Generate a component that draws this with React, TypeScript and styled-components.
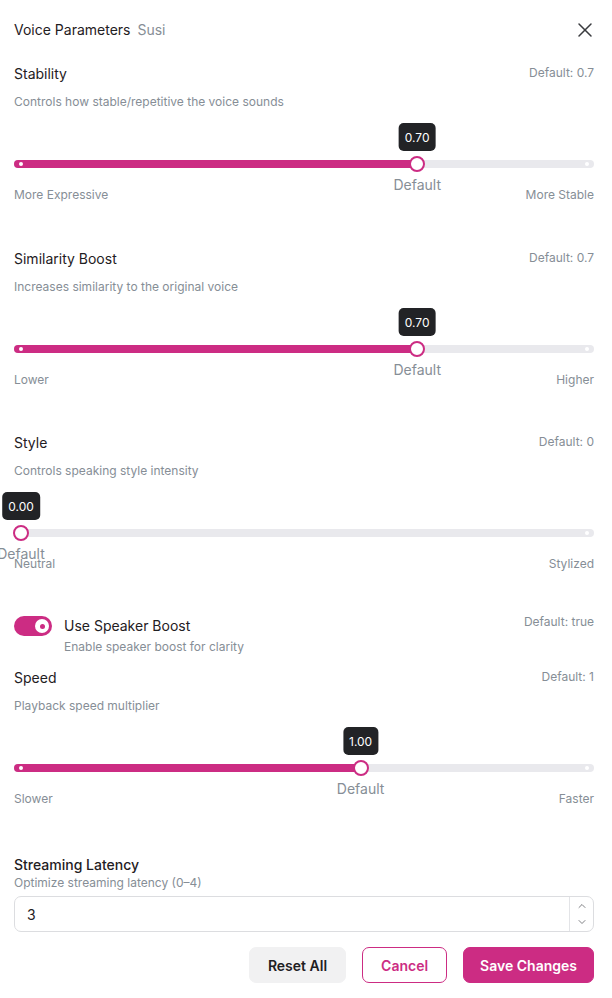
import React from 'react'
import styled, { createGlobalStyle } from 'styled-components'
import { X, ChevronUp, ChevronDown } from 'lucide-react'

const PINK = '#cc2c83'
const GRAY = '#868e96'
const INK = '#1f2023'

const GlobalStyle = createGlobalStyle`
   * { box-sizing: border-box; }
   body {
      margin: 0;
      background: #fff;
      font-family: Inter, 'Noto Sans', 'Liberation Sans', sans-serif;
      color: ${INK};
   }
`

const Styles = {
   Panel: styled.div`
      width: 612px;
      padding: 0 18px 0 14px;
      display: flex;
      flex-direction: column;
   `,
   Header: styled.header`
      height: 60px;
      display: flex;
      align-items: center;
      gap: 7px;
   `,
   HeaderTitle: styled.h2`
      margin: 0;
      font-size: 14px;
      line-height: 20px;
      font-weight: 400;
      color: ${INK};
   `,
   HeaderSub: styled.span`
      font-size: 14px;
      line-height: 20px;
      color: ${GRAY};
      flex: 1;
   `,
   Close: styled.button`
      border: 0;
      background: none;
      padding: 0;
      margin-right: -3px;
      display: flex;
      color: #3a3b3f;
      cursor: pointer;
   `,
   Section: styled.section<{ $gap: number }>`
      margin-top: ${(p) => p.$gap}px;
      display: flex;
      flex-direction: column;
   `,
   TitleRow: styled.div`
      display: flex;
      justify-content: space-between;
      align-items: center;
   `,
   Title: styled.div<{ $strong?: boolean }>`
      font-size: 14px;
      line-height: 20px;
      font-weight: ${(p) => (p.$strong ? 500 : 400)};
      color: ${INK};
   `,
   DefaultNote: styled.span`
      font-size: 12px;
      line-height: 16px;
      color: ${GRAY};
      margin-top: -2px;
   `,
   Desc: styled.div<{ $gap: number }>`
      margin-top: ${(p) => p.$gap}px;
      font-size: 12px;
      line-height: 16px;
      color: ${GRAY};
   `,
   SliderRoot: styled.div`
      position: relative;
      margin-top: 50px;
      height: 8px;
   `,
   Track: styled.div`
      height: 8px;
      border-radius: 4px;
      background: #e9e9ed;
      position: relative;
   `,
   Fill: styled.div`
      position: absolute;
      left: 0;
      top: 0;
      bottom: 0;
      border-radius: 4px;
      background: ${PINK};
   `,
   MarkDot: styled.span`
      position: absolute;
      top: 2px;
      width: 4px;
      height: 4px;
      margin-left: -2px;
      border-radius: 50%;
      background: #fff;
   `,
   Thumb: styled.span`
      position: absolute;
      top: -4px;
      width: 16px;
      height: 16px;
      margin-left: -8px;
      border-radius: 50%;
      background: #fff;
      border: 2px solid ${PINK};
   `,
   Tip: styled.span`
      position: absolute;
      bottom: calc(100% + 9px);
      transform: translateX(-50%);
      height: 28px;
      padding: 0 6px;
      display: flex;
      align-items: center;
      border-radius: 5px;
      background: #222326;
      color: #fff;
      font-size: 12px;
      white-space: nowrap;
   `,
   MarkLabel: styled.span`
      position: absolute;
      top: 15px;
      transform: translateX(-50%);
      font-size: 14px;
      line-height: 20px;
      color: ${GRAY};
      white-space: nowrap;
   `,
   RangeLabels: styled.div`
      margin-top: 19px;
      display: flex;
      justify-content: space-between;
      font-size: 12px;
      line-height: 16px;
      color: ${GRAY};
   `,
   ToggleRow: styled.div`
      display: flex;
      align-items: flex-start;
      gap: 12px;
   `,
   Switch: styled.span<{ $on: boolean }>`
      flex: none;
      width: 38px;
      height: 20px;
      border-radius: 10px;
      background: ${(p) => (p.$on ? PINK : '#dee2e6')};
      display: flex;
      align-items: center;
      justify-content: ${(p) => (p.$on ? 'flex-end' : 'flex-start')};
      padding: 0 3px;
   `,
   SwitchKnob: styled.span`
      width: 14px;
      height: 14px;
      border-radius: 50%;
      background: #fff;
      display: flex;
      align-items: center;
      justify-content: center;
      &::after {
         content: '';
         width: 5px;
         height: 5px;
         border-radius: 50%;
         background: ${PINK};
      }
   `,
   ToggleText: styled.div`
      flex: 1;
      display: flex;
      flex-direction: column;
   `,
   InputBox: styled.div`
      margin-top: 5px;
      height: 36px;
      border: 1px solid #dcdde0;
      border-radius: 7px;
      display: flex;
      overflow: hidden;
   `,
   Input: styled.input`
      flex: 1;
      border: 0;
      outline: none;
      padding: 0 12px;
      font-family: inherit;
      font-size: 14px;
      color: ${INK};
      background: transparent;
   `,
   Spinner: styled.div`
      width: 24px;
      border-left: 1px solid #e3e4e7;
      display: flex;
      flex-direction: column;
      align-items: center;
      justify-content: center;
      gap: 4px;
      color: #55575c;
   `,
   Actions: styled.div`
      margin-top: 15px;
      display: flex;
      justify-content: flex-end;
      gap: 16px;
   `,
   Button: styled.button<{ $kind: 'soft' | 'outline' | 'filled' }>`
      height: 36px;
      padding: 0 ${(p) => (p.$kind === 'filled' ? 16 : 18)}px;
      border-radius: 7px;
      font-family: inherit;
      font-size: 14px;
      font-weight: 600;
      cursor: pointer;
      border: 1px solid
         ${(p) => (p.$kind === 'soft' ? '#f1f1f2' : PINK)};
      background: ${(p) =>
         p.$kind === 'soft' ? '#f1f1f2' : p.$kind === 'filled' ? PINK : '#fff'};
      color: ${(p) =>
         p.$kind === 'soft' ? INK : p.$kind === 'filled' ? '#fff' : PINK};
   `,
}

interface SliderProps {
   value: number
   min: number
   max: number
   mark: number
   left: string
   right: string
}

// inner range is inset by half the thumb so both ends sit inside the bar
const pos = (v: number, min: number, max: number) =>
   `calc(7px + (100% - 14px) * ${(v - min) / (max - min)})`

const Slider = ({ value, min, max, mark, left, right }: SliderProps) => {
   const at = pos(value, min, max)
   return (
      <>
         <Styles.SliderRoot>
            <Styles.Track>
               <Styles.Fill style={{ width: at }} />
               <Styles.MarkDot style={{ left: pos(min, min, max) }} />
               <Styles.MarkDot style={{ left: pos(max, min, max) }} />
            </Styles.Track>
            <Styles.MarkLabel style={{ left: pos(mark, min, max) }}>
               Default
            </Styles.MarkLabel>
            <Styles.Thumb style={{ left: at }} />
            <Styles.Tip style={{ left: at }}>{value.toFixed(2)}</Styles.Tip>
         </Styles.SliderRoot>
         <Styles.RangeLabels>
            <span>{left}</span>
            <span>{right}</span>
         </Styles.RangeLabels>
      </>
   )
}

const Param = ({ gap, title, note, desc, ...slider }) => (
   <Styles.Section $gap={gap}>
      <Styles.TitleRow>
         <Styles.Title>{title}</Styles.Title>
         <Styles.DefaultNote>{note}</Styles.DefaultNote>
      </Styles.TitleRow>
      <Styles.Desc $gap={10}>{desc}</Styles.Desc>
      <Slider {...slider} />
   </Styles.Section>
)

export default function App() {
   return (
      <>
         <GlobalStyle />
         <Styles.Panel>
            <Styles.Header>
               <Styles.HeaderTitle>Voice Parameters</Styles.HeaderTitle>
               <Styles.HeaderSub>Susi</Styles.HeaderSub>
               <Styles.Close aria-label="Close">
                  <X size={24} strokeWidth={1.5} />
               </Styles.Close>
            </Styles.Header>

            <Param
               gap={4}
               title="Stability"
               note="Default: 0.7"
               desc="Controls how stable/repetitive the voice sounds"
               value={0.7}
               min={0}
               max={1}
               mark={0.7}
               left="More Expressive"
               right="More Stable"
            />
            <Param
               gap={46}
               title="Similarity Boost"
               note="Default: 0.7"
               desc="Increases similarity to the original voice"
               value={0.7}
               min={0}
               max={1}
               mark={0.7}
               left="Lower"
               right="Higher"
            />
            <Param
               gap={45}
               title="Style"
               note="Default: 0"
               desc="Controls speaking style intensity"
               value={0}
               min={0}
               max={1}
               mark={0}
               left="Neutral"
               right="Stylized"
            />

            <Styles.Section $gap={44}>
               <Styles.ToggleRow>
                  <Styles.Switch $on>
                     <Styles.SwitchKnob />
                  </Styles.Switch>
                  <Styles.ToggleText>
                     <Styles.Title>Use Speaker Boost</Styles.Title>
                     <Styles.Desc $gap={3}>Enable speaker boost for clarity</Styles.Desc>
                  </Styles.ToggleText>
                  <Styles.DefaultNote>Default: true</Styles.DefaultNote>
               </Styles.ToggleRow>
            </Styles.Section>

            <Param
               gap={13}
               title="Speed"
               note="Default: 1"
               desc="Playback speed multiplier"
               value={1}
               min={0.7}
               max={1.2}
               mark={1}
               left="Slower"
               right="Faster"
            />

            <Styles.Section $gap={48}>
               <Styles.Title $strong>Streaming Latency</Styles.Title>
               <Styles.Desc $gap={0}>Optimize streaming latency (0–4)</Styles.Desc>
               <Styles.InputBox>
                  <Styles.Input value="3" readOnly />
                  <Styles.Spinner>
                     <ChevronUp size={12} strokeWidth={1.5} />
                     <ChevronDown size={12} strokeWidth={1.5} />
                  </Styles.Spinner>
               </Styles.InputBox>
            </Styles.Section>

            <Styles.Actions>
               <Styles.Button $kind="soft">Reset All</Styles.Button>
               <Styles.Button $kind="outline">Cancel</Styles.Button>
               <Styles.Button $kind="filled">Save Changes</Styles.Button>
            </Styles.Actions>
         </Styles.Panel>
      </>
   )
}
